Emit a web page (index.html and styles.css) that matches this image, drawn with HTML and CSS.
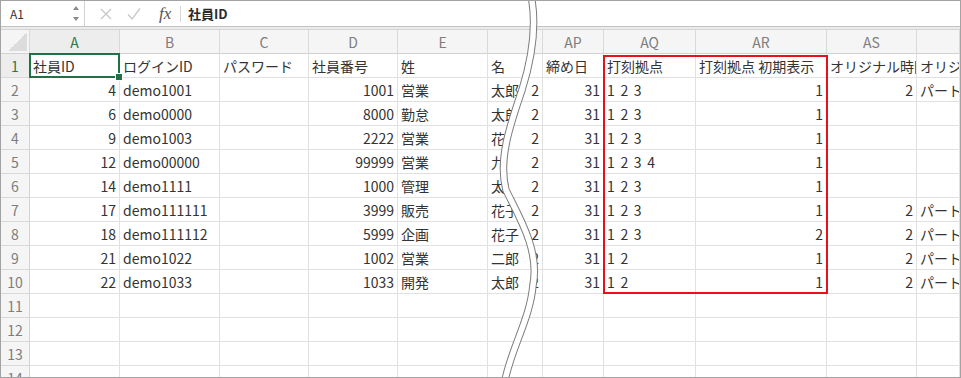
FILE: index.html
```html
<!DOCTYPE html>
<html lang="ja">
<head>
<meta charset="utf-8">
<title>Sheet</title>
<link rel="stylesheet" href="styles.css">
</head>
<body>
<div class="app">
  <div class="fbar">
    <div class="namebox">
      <span class="ref">A1</span>
      <svg class="spin" width="8" height="18" viewBox="0 0 8 18"><path d="M1 5 L4 1 L7 5 Z M1 12 L4 16 L7 12 Z" fill="#8a8a8a"/></svg>
    </div>
    <div class="fbtns">
      <svg width="14" height="14" viewBox="0 0 14 14"><path d="M2 2 L12 12 M12 2 L2 12" stroke="#c9c9c9" stroke-width="1.4" fill="none"/></svg>
      <svg width="14" height="14" viewBox="0 0 14 14"><path d="M1 7.5 L5 12 L13 1.5" stroke="#c9c9c9" stroke-width="1.4" fill="none"/></svg>
      <span class="fx">fx</span>
    </div>
    <div class="fsep"></div>
    <div class="ftext">社員ID</div>
  </div>
  <div class="band"></div>
  <div class="sheet">
    <div class="pane pane-left">
      <div class="row hrow"><div class="c h corner"><span class="tri"></span></div><div class="c h sel-h">A</div><div class="c h">B</div><div class="c h">C</div><div class="c h">D</div><div class="c h">E</div><div class="c h"></div></div>
      <div class="row"><div class="c rn sel-h">1</div><div class="c sel">社員ID</div><div class="c">ログインID</div><div class="c">パスワード</div><div class="c">社員番号</div><div class="c">姓</div><div class="c">名</div></div>
      <div class="row"><div class="c rn">2</div><div class="c n">4</div><div class="c">demo1001</div><div class="c"></div><div class="c n">1001</div><div class="c">営業</div><div class="c">太郎</div></div>
      <div class="row"><div class="c rn">3</div><div class="c n">6</div><div class="c">demo0000</div><div class="c"></div><div class="c n">8000</div><div class="c">勤怠</div><div class="c">太郎</div></div>
      <div class="row"><div class="c rn">4</div><div class="c n">9</div><div class="c">demo1003</div><div class="c"></div><div class="c n">2222</div><div class="c">営業</div><div class="c">花子</div></div>
      <div class="row"><div class="c rn">5</div><div class="c n">12</div><div class="c">demo00000</div><div class="c"></div><div class="c n">99999</div><div class="c">営業</div><div class="c">九郎</div></div>
      <div class="row"><div class="c rn">6</div><div class="c n">14</div><div class="c">demo1111</div><div class="c"></div><div class="c n">1000</div><div class="c">管理</div><div class="c">太郎</div></div>
      <div class="row"><div class="c rn">7</div><div class="c n">17</div><div class="c">demo111111</div><div class="c"></div><div class="c n">3999</div><div class="c">販売</div><div class="c">花子</div></div>
      <div class="row"><div class="c rn">8</div><div class="c n">18</div><div class="c">demo111112</div><div class="c"></div><div class="c n">5999</div><div class="c">企画</div><div class="c">花子</div></div>
      <div class="row"><div class="c rn">9</div><div class="c n">21</div><div class="c">demo1022</div><div class="c"></div><div class="c n">1002</div><div class="c">営業</div><div class="c">二郎</div></div>
      <div class="row"><div class="c rn">10</div><div class="c n">22</div><div class="c">demo1033</div><div class="c"></div><div class="c n">1033</div><div class="c">開発</div><div class="c">太郎</div></div>
      <div class="row"><div class="c rn">11</div><div class="c"></div><div class="c"></div><div class="c"></div><div class="c"></div><div class="c"></div><div class="c"></div></div>
      <div class="row"><div class="c rn">12</div><div class="c"></div><div class="c"></div><div class="c"></div><div class="c"></div><div class="c"></div><div class="c"></div></div>
      <div class="row"><div class="c rn">13</div><div class="c"></div><div class="c"></div><div class="c"></div><div class="c"></div><div class="c"></div><div class="c"></div></div>
      <div class="row"><div class="c rn">14</div><div class="c"></div><div class="c"></div><div class="c"></div><div class="c"></div><div class="c"></div><div class="c"></div></div>
    </div>
    <div class="pane pane-right">
      <div class="row hrow"><div class="c h"></div><div class="c h">AP</div><div class="c h">AQ</div><div class="c h">AR</div><div class="c h">AS</div><div class="c h"></div></div>
      <div class="row"><div class="c"></div><div class="c">締め日</div><div class="c mark">打刻拠点<span class="redbox"></span></div><div class="c">打刻拠点 初期表示</div><div class="c">オリジナル時間</div><div class="c">オリジナル区分</div></div>
      <div class="row"><div class="c n">2</div><div class="c n">31</div><div class="c sp">1 2 3</div><div class="c n">1</div><div class="c n">2</div><div class="c">パート</div></div>
      <div class="row"><div class="c n">2</div><div class="c n">31</div><div class="c sp">1 2 3</div><div class="c n">1</div><div class="c"></div><div class="c"></div></div>
      <div class="row"><div class="c n">2</div><div class="c n">31</div><div class="c sp">1 2 3</div><div class="c n">1</div><div class="c"></div><div class="c"></div></div>
      <div class="row"><div class="c n">2</div><div class="c n">31</div><div class="c sp">1 2 3 4</div><div class="c n">1</div><div class="c"></div><div class="c"></div></div>
      <div class="row"><div class="c n">2</div><div class="c n">31</div><div class="c sp">1 2 3</div><div class="c n">1</div><div class="c"></div><div class="c"></div></div>
      <div class="row"><div class="c n">2</div><div class="c n">31</div><div class="c sp">1 2 3</div><div class="c n">1</div><div class="c n">2</div><div class="c">パート</div></div>
      <div class="row"><div class="c n">2</div><div class="c n">31</div><div class="c sp">1 2 3</div><div class="c n">2</div><div class="c n">2</div><div class="c">パート</div></div>
      <div class="row"><div class="c n">2</div><div class="c n">31</div><div class="c sp">1 2</div><div class="c n">1</div><div class="c n">2</div><div class="c">パート</div></div>
      <div class="row"><div class="c n">2</div><div class="c n">31</div><div class="c sp">1 2</div><div class="c n">1</div><div class="c n">2</div><div class="c">パート</div></div>
      <div class="row"><div class="c"></div><div class="c"></div><div class="c"></div><div class="c"></div><div class="c"></div><div class="c"></div></div>
      <div class="row"><div class="c"></div><div class="c"></div><div class="c"></div><div class="c"></div><div class="c"></div><div class="c"></div></div>
      <div class="row"><div class="c"></div><div class="c"></div><div class="c"></div><div class="c"></div><div class="c"></div><div class="c"></div></div>
      <div class="row"><div class="c"></div><div class="c"></div><div class="c"></div><div class="c"></div><div class="c"></div><div class="c"></div></div>
    </div>
  </div>
  <svg class="wave" width="961" height="378" viewBox="0 0 961 378">
    <path d="M531,-5 C537,25 533,55 522,90 C510,125 498,160 506,190 C518,215 540,250 533,285 C530,320 510,350 504,385" stroke="#7c7c7c" stroke-width="7.5" fill="none"/>
    <path d="M531,-5 C537,25 533,55 522,90 C510,125 498,160 506,190 C518,215 540,250 533,285 C530,320 510,350 504,385" stroke="#ffffff" stroke-width="5.5" fill="none"/>
  </svg>
</div>
</body>
</html>
```

FILE: styles.css
```css
* { box-sizing: border-box; }
html, body { margin: 0; padding: 0; background: #fff; }
body {
  font-family: "Noto Sans CJK JP", "Noto Sans", sans-serif;
  color: #333;
}
.app {
  position: relative;
  width: 961px;
  height: 378px;
  border: 1px solid #a3a3a3;
  overflow: hidden;
  background: #fff;
}
.fbar {
  height: 25px;
  display: flex;
  align-items: center;
}
.namebox {
  width: 84px;
  height: 100%;
  display: flex;
  align-items: center;
  justify-content: space-between;
  padding: 0 4px 0 9px;
  border-right: 1px solid #d2d2d2;
}
.ref { font-size: 12px; color: #333; }
.spin { display: block; }
.fbtns {
  display: flex;
  align-items: center;
  gap: 14px;
  padding-left: 14px;
  width: 95px;
}
.fbtns svg { display: block; }
.fx {
  font-family: "Liberation Serif", serif;
  font-style: italic;
  font-size: 17px;
  color: #555;
  margin-left: 4px;
  line-height: 1;
}
.fsep {
  width: 1px;
  height: 16px;
  background: #d8d8d8;
}
.ftext {
  padding-left: 7px;
  font-size: 13px;
  font-weight: 700;
  color: #2a2a2a;
}
.band {
  height: 4px;
  border-top: 1px solid #c2c2c2;
  border-bottom: 1px solid #d4d4d4;
  background: #ececec;
}
.sheet {
  display: grid;
  grid-template-columns: 100%;
}
.pane { grid-area: 1 / 1; }
.pane-left {
  --cols: 29px 90px 100px 89px 89px 90px 80px;
  clip-path: path('M0,-40 L530,-40 L530,-30 C536,-5 532,25 521,60 C509,95 497,130 505,160 C517,185 539,220 532,255 C529,290 509,320 503,350 L503,400 L0,400 Z');
}
.pane-right {
  --cols: 55px 61px 92px 131px 90px 1fr;
  padding-left: 487px;
  clip-path: path('M530,-40 L530,-30 C536,-5 532,25 521,60 C509,95 497,130 505,160 C517,185 539,220 532,255 C529,290 509,320 503,350 L503,400 L2000,400 L2000,-40 Z');
}
.row {
  display: grid;
  grid-template-columns: var(--cols);
  height: 24px;
}
.c {
  position: relative;
  display: flex;
  align-items: center;
  padding: 0 3px 0 3px;
  border-right: 1px solid #e1e1e1;
  border-bottom: 1px solid #e1e1e1;
  white-space: nowrap;
  overflow: hidden;
  font-size: 14px;
  color: #333;
  min-width: 0;
}
.n { justify-content: flex-end; }
.sp { word-spacing: 2.5px; }
.h, .rn {
  background: #f5f5f5;
  color: #7d7d7d;
  justify-content: center;
  border-color: #d9d9d9;
}
.hrow .c { border-bottom-color: #d2d2d2; }
.rn { border-right-color: #d2d2d2; padding: 0; }
.sel-h { color: #2b7a4b; background: #ededed; }
.corner { position: relative; }
.tri {
  position: absolute;
  right: 2px;
  bottom: 2px;
  width: 19px;
  height: 19px;
  background: linear-gradient(to bottom right, transparent 50%, #dcdcdc 50%);
}
.sel { overflow: visible; z-index: 1; }
.sel::before {
  content: "";
  position: absolute;
  left: -1px;
  top: -1px;
  right: -1px;
  bottom: -1px;
  border: 2px solid #1f7246;
}
.sel::after {
  content: "";
  position: absolute;
  right: -4px;
  bottom: -4px;
  width: 6px;
  height: 6px;
  background: #1f7246;
  border: 1px solid #fff;
}
.mark { overflow: visible; }
.redbox {
  position: absolute;
  left: -1px;
  top: 1px;
  width: 225px;
  height: 239px;
  border: 2px solid #e8101a;
  z-index: 2;
}
.wave {
  position: absolute;
  left: -1px;
  top: -1px;
  pointer-events: none;
  z-index: 5;
}
```
